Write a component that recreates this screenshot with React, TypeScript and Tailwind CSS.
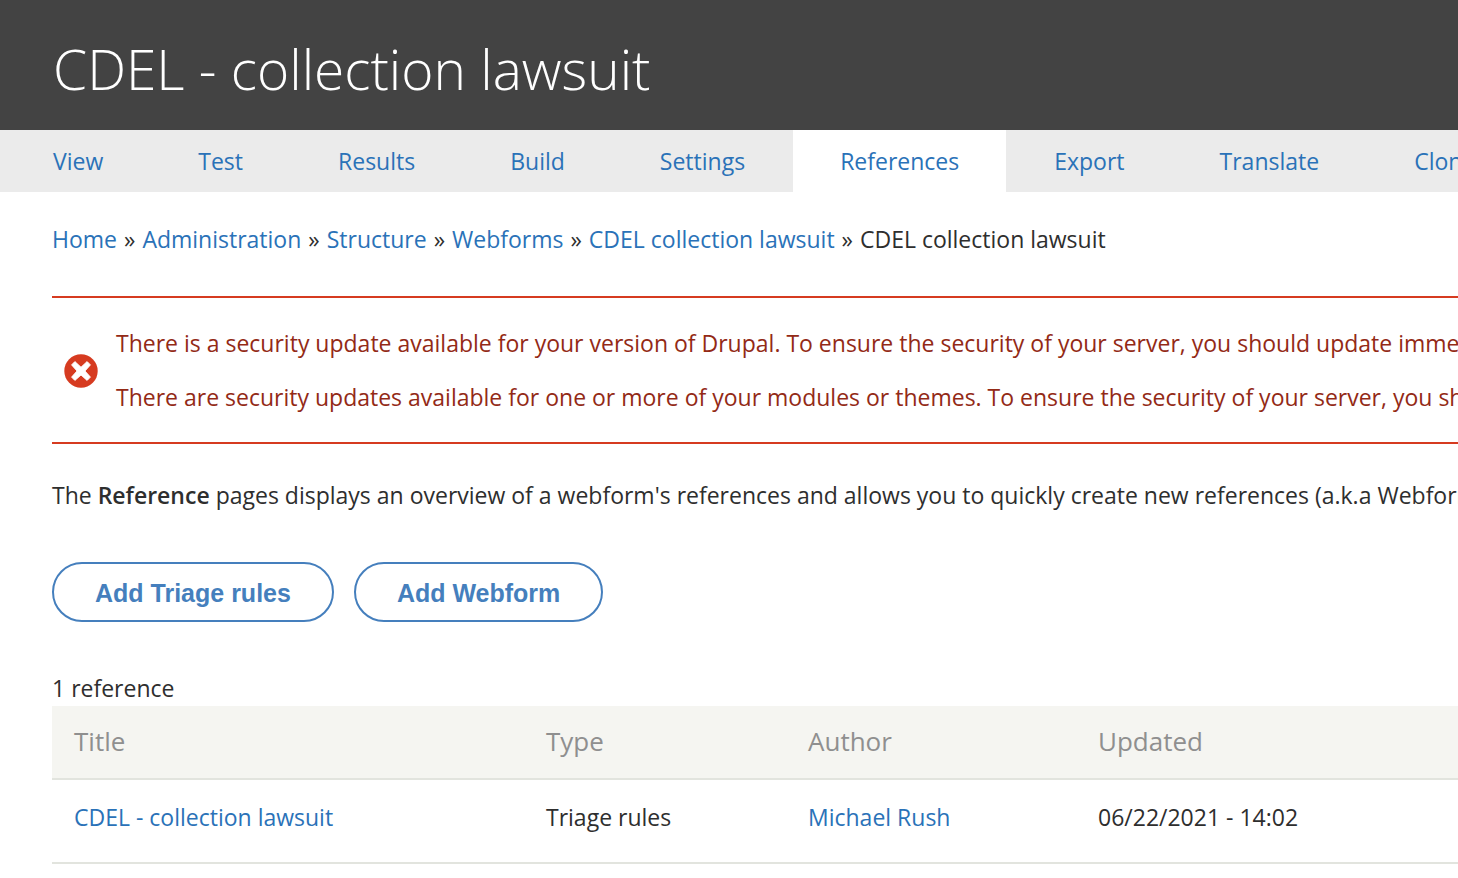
const tabs = ['View', 'Test', 'Results', 'Build', 'Settings', 'References', 'Export', 'Translate', 'Clone'];
const crumbs = ['Home', 'Administration', 'Structure', 'Webforms', 'CDEL collection lawsuit'];
const link = 'text-[#2a72b8] whitespace-nowrap';
const button =
  'h-[60px] rounded-full border-2 border-[#457fbd] bg-white px-[41px] pt-[2px] font-["Liberation_Sans",sans-serif] text-[25px] font-bold text-[#457fbd]';

function ErrorIcon() {
  return (
    <svg viewBox="0 0 34 34" className="mt-[2px] size-[34px] shrink-0" role="img" aria-label="Error">
      <circle cx="17" cy="17" r="16.7" fill="#d63b20" />
      <path
        d="M10.9 7.6 17 13.3 23.1 7.6 26.4 10.9 20.9 17 26.4 23.1 23.1 26.4 17 20.9 10.9 26.4 7.6 23.1 13.1 17 7.6 10.9Z"
        fill="#fff"
        stroke="#fff"
        strokeWidth="1"
        strokeLinejoin="round"
      />
    </svg>
  );
}

export default function App() {
  return (
    <div className="overflow-x-hidden bg-white font-['Open_Sans',sans-serif] text-[23px] leading-[36px] text-[#2e2e2e]">
      <header className="bg-[#434343] pt-[33px] pb-[25px] pl-[53px]">
        <h1 className="text-[55px] leading-[72px] font-light whitespace-nowrap text-white">CDEL - collection lawsuit</h1>
      </header>
      <nav aria-label="Tabs" className="flex gap-px bg-[#ebebeb] pl-[6px]">
        {tabs.map((t) => (
          <a key={t} href="#" className={`${link} px-[47px] py-[13px] ${t === 'References' ? 'bg-white' : ''}`}>
            {t}
          </a>
        ))}
      </nav>
      <main className="pl-[52px]">
        <nav aria-label="Breadcrumb" className="pt-[29px] whitespace-nowrap">
          {crumbs.map((c) => (
            <span key={c}>
              <a href="#" className={link}>{c}</a> <span className="mx-px">»</span>{' '}
            </span>
          ))}
          CDEL collection lawsuit
        </nav>
        <div className="mt-[39px] flex h-[148px] items-center gap-[18px] border-y-2 border-[#d63b20] pl-[12px] text-[#932a16]">
          <ErrorIcon />
          <div className="flex flex-col gap-[18px] whitespace-nowrap">
            <p>There is a security update available for your version of Drupal. To ensure the security of your server, you should update immediately!</p>
            <p>There are security updates available for one or more of your modules or themes. To ensure the security of your server, you should update immediately!</p>
          </div>
        </div>
        <p className="mt-[33px] whitespace-nowrap">
          The <strong className="font-semibold">Reference</strong> pages displays an overview of a webform's references and allows you to quickly create new references (a.k.a Webform nodes).
        </p>
        <div className="mt-[49px] flex gap-[20px]">
          <button className={button}>Add Triage rules</button>
          <button className={button}>Add Webform</button>
        </div>
        <p className="mt-[49px] leading-[35px]">1 reference</p>
        <table className="w-full min-w-[1500px] table-fixed border-collapse text-left">
          <colgroup>
            <col className="w-[472px]" />
            <col className="w-[262px]" />
            <col className="w-[290px]" />
            <col />
          </colgroup>
          <thead>
            <tr className="h-[73px] border-b-2 border-[#e2e4de] bg-[#f5f5f1] text-[26px] text-[#8f8f8f]">
              {['Title', 'Type', 'Author', 'Updated'].map((h) => (
                <th key={h} className="px-[22px] pb-[2px] font-normal">{h}</th>
              ))}
            </tr>
          </thead>
          <tbody>
            <tr className="h-[84px] border-b-2 border-[#e2e4de] *:px-[22px] *:pb-[8px]">
              <td><a href="#" className={link}>CDEL - collection lawsuit</a></td>
              <td>Triage rules</td>
              <td><a href="#" className={link}>Michael Rush</a></td>
              <td>06/22/2021 - 14:02</td>
            </tr>
          </tbody>
        </table>
      </main>
    </div>
  );
}
